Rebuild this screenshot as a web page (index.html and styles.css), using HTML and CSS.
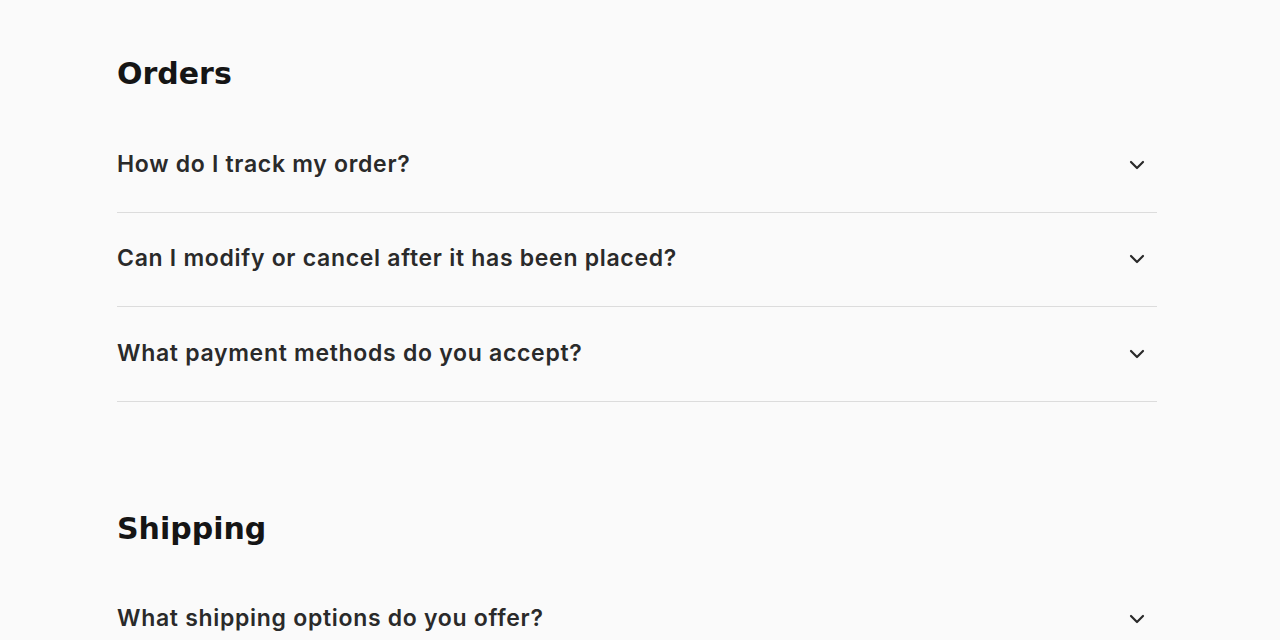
FILE: index.html
```html
<!DOCTYPE html>
<html lang="en">
<head>
<meta charset="utf-8">
<title>FAQ</title>
<link rel="stylesheet" href="styles.css">
</head>
<body>
<main class="faq">
  <section class="faq-group">
    <h2 class="faq-title">Orders</h2>
    <ul class="faq-list">
      <li class="faq-item"><span class="faq-q">How do I track my order?</span><svg class="chev" viewBox="0 0 16 10" width="16" height="10"><path d="M2 2l6 6 6-6"/></svg></li>
      <li class="faq-item"><span class="faq-q">Can I modify or cancel after it has been placed?</span><svg class="chev" viewBox="0 0 16 10" width="16" height="10"><path d="M2 2l6 6 6-6"/></svg></li>
      <li class="faq-item"><span class="faq-q">What payment methods do you accept?</span><svg class="chev" viewBox="0 0 16 10" width="16" height="10"><path d="M2 2l6 6 6-6"/></svg></li>
    </ul>
  </section>
  <section class="faq-group">
    <h2 class="faq-title">Shipping</h2>
    <ul class="faq-list">
      <li class="faq-item"><span class="faq-q">What shipping options do you offer?</span><svg class="chev" viewBox="0 0 16 10" width="16" height="10"><path d="M2 2l6 6 6-6"/></svg></li>
    </ul>
  </section>
</main>
</body>
</html>
```

FILE: styles.css
```css
html, body {
  margin: 0;
  padding: 0;
  background: #fafafa;
  color: #222;
}
body {
  font-family: Inter, "Open Sans", "Liberation Sans", sans-serif;
}
.faq {
  width: 1040px;
  margin-left: 117px;
  padding-top: 53px;
}
.faq-group {
  margin-bottom: 106px;
}
.faq-title {
  margin: 0;
  font-family: "DejaVu Sans", "Liberation Sans", sans-serif;
  font-weight: 700;
  font-size: 30px;
  line-height: 42px;
  color: #151515;
}
.faq-list {
  list-style: none;
  margin: 0;
  padding: 0;
  margin-top: 23px;
}
.faq-item {
  display: flex;
  align-items: center;
  justify-content: space-between;
  height: 93.5px;
  border-bottom: 1px solid #dcdcdc;
}
.faq-q {
  font-size: 23px;
  font-weight: 600;
  letter-spacing: 0.7px;
  line-height: 28px;
  margin-top: -2px;
  color: #2a2a2a;
}
.chev {
  margin-right: 12px;
  fill: none;
  stroke: #2a2a2a;
  stroke-width: 2.2;
  stroke-linecap: round;
  stroke-linejoin: round;
}
```
